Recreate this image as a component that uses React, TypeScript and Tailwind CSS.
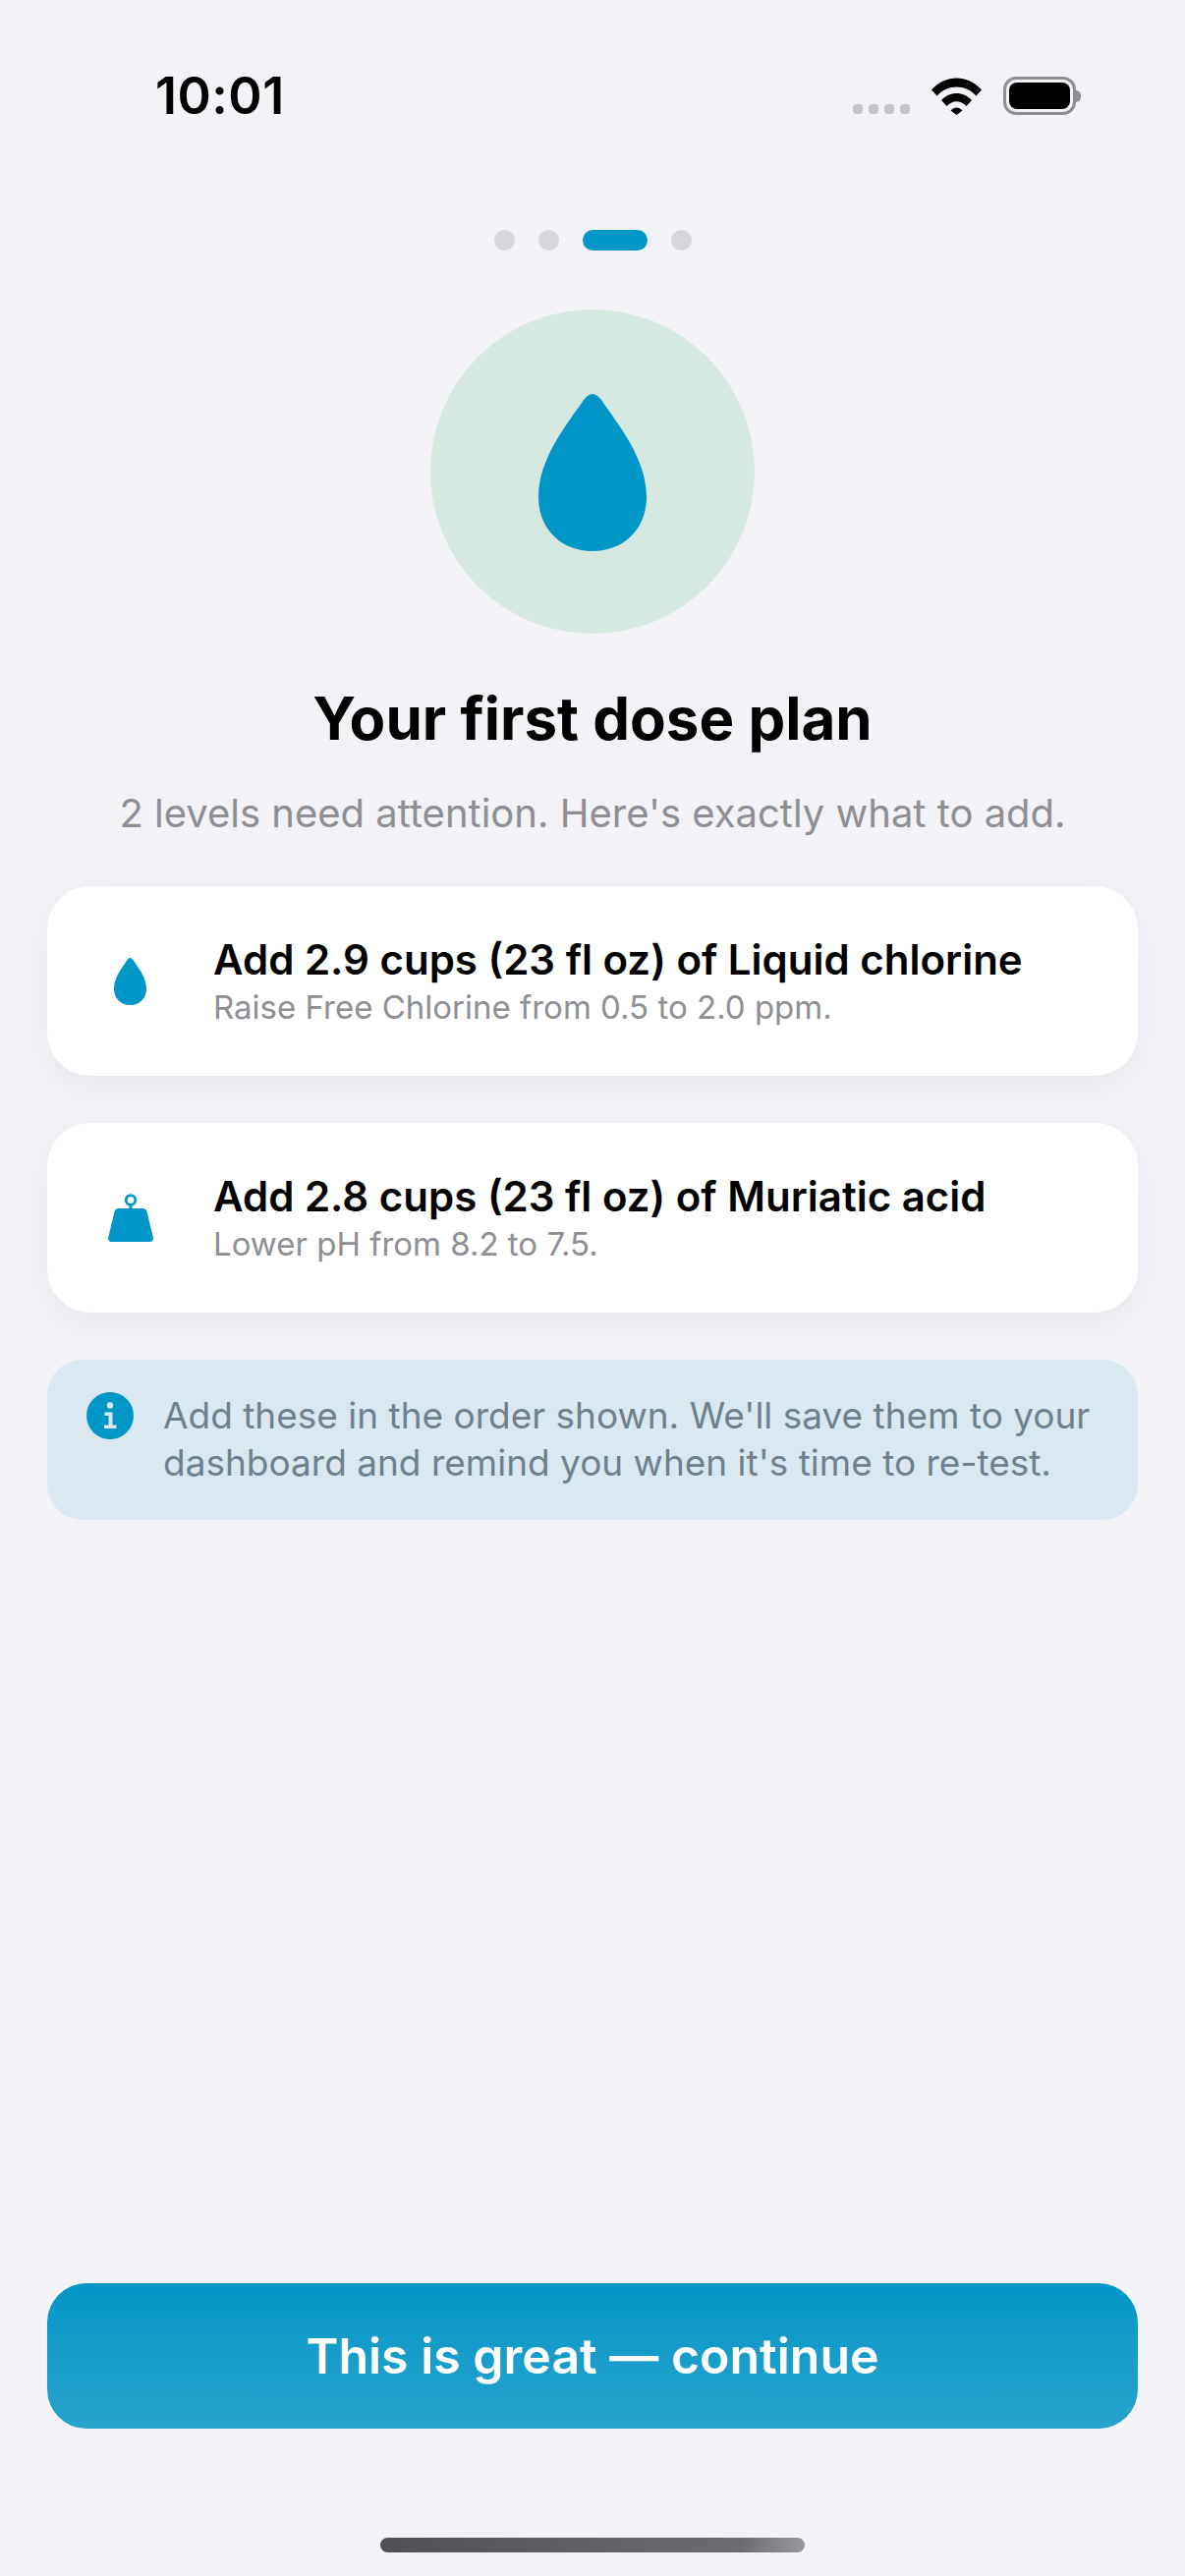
import React from "react";

const BLUE = "#0096c7";

const Drop = ({ className }: { className: string }) => (
	<svg viewBox="0 0 110 160" className={className} fill={BLUE}>
		<path d="M46 6C49 2 52 0 55 0C58 0 61 2 64 6C80 30 110 65 110 105C110 138 86 160 55 160C24 160 0 138 0 105C0 65 30 30 46 6Z" />
	</svg>
);

const Weight = () => (
	<svg viewBox="0 0 46 49" className="h-[49px] w-[46px]">
		<circle cx="23" cy="6.5" r="4.8" fill="none" stroke={BLUE} strokeWidth="2.8" />
		<rect x="21.5" y="11" width="3" height="5" fill={BLUE} />
		<path
			d="M11 15H35C37.5 15 39 16.5 39.6 18.5L45.8 44.5C46.4 47 45 49 42.5 49H3.5C1 49 -0.4 47 0.2 44.5L6.4 18.5C7 16.5 8.5 15 11 15Z"
			fill={BLUE}
		/>
	</svg>
);

const InfoIcon = () => (
	<svg viewBox="0 0 48 48" className="h-12 w-12 shrink-0">
		<circle cx="24" cy="24" r="24" fill={BLUE} />
		<circle cx="24" cy="13.5" r="3.2" fill="#d9e8f1" />
		<path
			d="M18.5 20.5H26.5V33.5H30.5V37H18V33.5H22.5V24H18.5Z"
			fill="#d9e8f1"
		/>
	</svg>
);

const Wifi = () => (
	<svg viewBox="0 0 51 38" className="h-[38px] w-[51px]">
		<path d="M0 12.5C14-3.5 37-3.5 51 12.5L45.5 18.5C34.5 6.5 16.5 6.5 5.500 18.5Z" />
		<path d="M10 23C18.500 13.500 32.500 13.500 41 23L35.500 29C29.500 22.500 21.500 22.500 15.500 29Z" />
		<path d="M19.500 33.500C23 29.500 28 29.500 31.500 33.500L25.500 38Z" />
	</svg>
);

const Battery = () => (
	<div className="flex items-center">
		<div className="h-[39px] w-[74px] rounded-[13px] border-[3px] border-[#8e8e93] p-[3px]">
			<div className="h-full w-full rounded-[8px] bg-black" />
		</div>
		<div className="h-[12px] w-[5px] rounded-r-full bg-[#8e8e93]" />
	</div>
);

const StatusBar = () => (
	<div className="flex h-[39px] items-center justify-between pl-[158px] pr-[106px]">
		<span className="text-[52px] leading-none font-semibold tracking-[0.5px] text-black">
			10:01
		</span>
		<div className="flex items-center">
			<div className="mr-[22px] flex gap-[6px] self-end pb-[1px]">
				<span className="h-[10px] w-[10px] rounded-[4px] bg-[#c4c4c8]" />
				<span className="h-[10px] w-[10px] rounded-[4px] bg-[#c4c4c8]" />
				<span className="h-[10px] w-[10px] rounded-[4px] bg-[#c4c4c8]" />
				<span className="h-[10px] w-[10px] rounded-[4px] bg-[#c4c4c8]" />
			</div>
			<Wifi />
			<div className="ml-[22px]">
				<Battery />
			</div>
		</div>
	</div>
);

const Pager = () => (
	<div className="mt-[117px] flex items-center justify-center gap-[24px]">
		<span className="h-[21px] w-[21px] rounded-full bg-[#d6d6dc]" />
		<span className="h-[21px] w-[21px] rounded-full bg-[#d6d6dc]" />
		<span className="h-[21px] w-[66px] rounded-full bg-[#0096c7]" />
		<span className="h-[21px] w-[21px] rounded-full bg-[#d6d6dc]" />
	</div>
);

const DoseCard = ({
	icon,
	title,
	subtitle,
}: {
	icon: React.ReactNode;
	title: string;
	subtitle: string;
}) => (
	<div className="flex h-[193px] items-center rounded-[44px] bg-white shadow-[0_12px_40px_rgba(0,0,0,0.05)]">
		<div className="flex w-[169px] shrink-0 justify-center pl-[0px]">
			{icon}
		</div>
		<div className="flex flex-col">
			<span className="text-[42px] leading-[52px] font-semibold text-black">
				{title}
			</span>
			<span className="text-[33px] leading-[44px] font-normal text-[#8e8e93]">
				{subtitle}
			</span>
		</div>
	</div>
);

export default function App() {
	return (
		<div
			className="flex h-[2622px] w-full flex-col bg-[#f2f2f7] pt-[78px] pb-[24px]"
			style={{ fontFamily: "Inter, sans-serif" }}
		>
			<StatusBar />
			<Pager />

			<div className="mt-[60px] flex justify-center">
				<div className="flex h-[330px] w-[330px] items-center justify-center rounded-full bg-[#d6e9e1] pt-[2px]">
					<Drop className="h-[160px] w-[110px]" />
				</div>
			</div>

			<h1 className="mt-[50px] text-center text-[60px] leading-[72px] font-bold text-black">
				Your first dose plan
			</h1>
			<p className="mt-[35px] text-center text-[40px] leading-[52px] text-[#8e8e93]">
				2 levels need attention. Here's exactly what to add.
			</p>

			<div className="mt-[48px] flex flex-col gap-[48px] px-[48px]">
				<DoseCard
					icon={<Drop className="h-[48px] w-[33px]" />}
					title="Add 2.9 cups (23 fl oz) of Liquid chlorine"
					subtitle="Raise Free Chlorine from 0.5 to 2.0 ppm."
				/>
				<DoseCard
					icon={<Weight />}
					title="Add 2.8 cups (23 fl oz) of Muriatic acid"
					subtitle="Lower pH from 8.2 to 7.5."
				/>
				<div className="flex h-[163px] items-start gap-[30px] rounded-[36px] bg-[#d9e8f1] pt-[33px] pl-[40px]">
					<InfoIcon />
					<p className="text-[37px] leading-[48px] text-[#6f808d]">
						Add these in the order shown. We'll save them to your
						<br />
						dashboard and remind you when it's time to re-test.
					</p>
				</div>
			</div>

			<div className="mt-auto px-[48px]">
				<button className="flex h-[148px] w-full items-center justify-center rounded-[40px] bg-gradient-to-b from-[#0096c7] to-[#26a3cd] text-[50px] font-semibold text-white">
					This is great — continue
				</button>
			</div>

			<div className="mt-[111px] flex justify-center">
				<div className="h-[15px] w-[432px] rounded-full bg-[linear-gradient(90deg,#4f4f54_0%,#6b6b70_85%,#9a9a9e_100%)]" />
			</div>
		</div>
	);
}
